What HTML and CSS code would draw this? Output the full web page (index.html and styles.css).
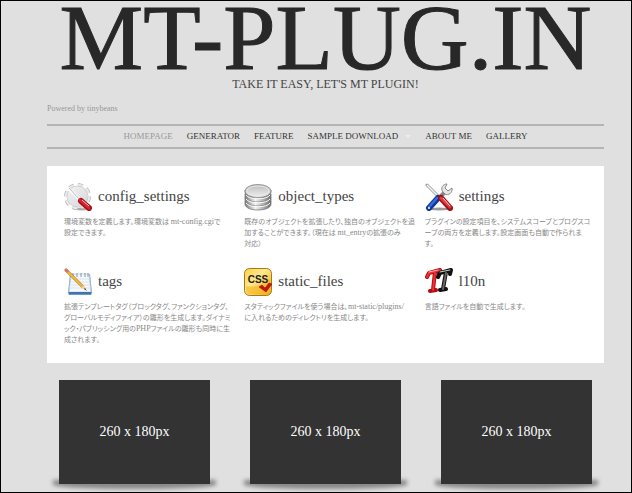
FILE: index.html
```html
<!DOCTYPE html>
<html lang="ja">
<head>
  <meta charset="utf-8">
  <title>MT-PLUG.IN</title>
  <link rel="stylesheet" href="styles.css">
</head>
<body>
  <div class="wrapper">
    <header class="header">
      <h1>MT-PLUG.IN</h1>
      <p class="tagline">TAKE IT EASY, LET'S MT PLUGIN!</p>
      <p class="powered">Powered by tinybeans</p>
    </header>

    <nav class="menu">
      <a href="#" class="current">HOMEPAGE</a>
      <a href="#">GENERATOR</a>
      <a href="#">FEATURE</a>
      <a href="#" class="has-sub">SAMPLE DOWNLOAD</a>
      <a href="#">ABOUT ME</a>
      <a href="#">GALLERY</a>
    </nav>

    <main>
      <section class="features">
        <article class="feature">
          <div class="feature-head">
            <svg class="icon" viewBox="0 0 28 28" aria-hidden="true">
              <defs>
                <linearGradient id="gear" x1="0" y1="0" x2="1" y2="1">
                  <stop offset="0" stop-color="#f4f4f4"/>
                  <stop offset="1" stop-color="#d3d6d8"/>
                </linearGradient>
              </defs>
              <ellipse cx="18" cy="26" rx="9" ry="1.500" fill="#aaa"/>
              <circle cx="13.500" cy="13.500" r="11.500" fill="none" stroke="#bbb" stroke-width="4" stroke-dasharray="5 4.030"/>
              <circle cx="13.500" cy="13.500" r="11.500" fill="none" stroke="#e9e9e9" stroke-width="2.500" stroke-dasharray="5 4.030"/>
              <circle cx="13.500" cy="13.500" r="10.500" fill="url(#gear)" stroke="#c9cbcd" stroke-width=".8"/>
              <path d="M4 5l11 11" stroke="#fff" stroke-width="3"/>
              <path d="M5 5l11 12" stroke="#b5b8ba" stroke-width="1"/>
              <path d="M17 18l8 7" stroke="#a80f18" stroke-width="6" stroke-linecap="round"/>
              <path d="M16 17l9 8" stroke="#d8242c" stroke-width="3" stroke-linecap="round"/>
              <path d="M18 17l7 6" stroke="#ffc9c9" stroke-width="1"/>
            </svg>
            <h2>config_settings</h2>
          </div>
          <p>環境変数を定義します。環境変数は <span>mt-config.cgi</span>で<br>設定できます。</p>
        </article>

        <article class="feature">
          <div class="feature-head">
            <svg class="icon" viewBox="0 0 28 28" aria-hidden="true">
              <defs>
                <linearGradient id="disk" x1="0" y1="0" x2="1" y2="0">
                  <stop offset="0" stop-color="#777"/>
                  <stop offset=".4" stop-color="#f4f4f4"/>
                  <stop offset="1" stop-color="#6c6c6c"/>
                </linearGradient>
                <linearGradient id="disktop" x1="0" y1="0" x2="0" y2="1">
                  <stop offset="0" stop-color="#bbb"/>
                  <stop offset="1" stop-color="#f1f1f1"/>
                </linearGradient>
              </defs>
              <g fill="url(#disk)" stroke="#777" stroke-width=".8">
                <path d="M1 18v3c0 8 26 8 26 0v-3z"/>
                <path d="M1 14v3c0 8 26 8 26 0v-3z"/>
                <path d="M1 11v2c0 8 26 8 26 0v-2z"/>
                <path d="M1 7v2c0 8 26 8 26 0V7z"/>
              </g>
              <g fill="none" stroke="#fff" stroke-width="1">
                <path d="M2 12c3 5 21 5 24 0"/>
                <path d="M2 16c3 5 21 5 24 0"/>
                <path d="M2 20c3 5 21 5 24 0"/>
              </g>
              <ellipse cx="14" cy="8" rx="13" ry="6.500" fill="url(#disktop)" stroke="#888" stroke-width=".8"/>
              <ellipse cx="14" cy="8" rx="11" ry="5" fill="none" stroke="#e8e8e8"/>
            </svg>
            <h2>object_types</h2>
          </div>
          <p>既存のオブジェクトを拡張したり、独自のオブジェクトを追<br>加することができます。（現在は <span>mt_entry</span>の拡張のみ<br>対応）</p>
        </article>

        <article class="feature">
          <div class="feature-head">
            <svg class="icon" viewBox="0 0 28 28" aria-hidden="true">
              <ellipse cx="14" cy="26" rx="11" ry="1.500" fill="#999"/>
              <path d="M2 2l14 14" stroke="#999" stroke-width="3" stroke-linecap="round"/>
              <path d="M2 2l14 14" stroke="#f5f5f5" stroke-width="1.500"/>
              <path d="M20 9L12 17" stroke="#888" stroke-width="4"/>
              <path d="M18 9c-3-4 0-8 4-8l-2 4 3 3 4-3c1 5-4 8-7 6z" fill="#e6e6e6" stroke="#888" stroke-width="1"/>
              <path d="M13 15L4 25" stroke="#12359b" stroke-width="6" stroke-linecap="round"/>
              <path d="M12 15L4 24" stroke="#346de0" stroke-width="2.500" stroke-linecap="round"/>
              <circle cx="4" cy="25" r="1" fill="#fff"/>
              <path d="M16 15l9 10" stroke="#9e1119" stroke-width="6" stroke-linecap="round"/>
              <path d="M16 15l9 9" stroke="#e33b3b" stroke-width="3" stroke-linecap="round"/>
              <path d="M18 15l7 8" stroke="#ffd5d5" stroke-width="1"/>
            </svg>
            <h2>settings</h2>
          </div>
          <p>プラグインの設定項目を、システムスコープとブログスコ<br>ープの両方を定義します。設定画面も自動で作られま<br>す。</p>
        </article>

        <article class="feature">
          <div class="feature-head">
            <svg class="icon" viewBox="0 0 28 28" aria-hidden="true">
              <path d="M6 6h20l2 19-1 2H5l-1-2z" fill="#6b9ccb"/>
              <path d="M7 6h18l2 18H5z" fill="#f6f9fc" stroke="#bccbdc" stroke-width=".8"/>
              <path d="M7 11h18M7 14h18M6 17h20M6 20h20" stroke="#d5dfe9" stroke-width=".8"/>
              <path d="M9 5v4M13 5v4M17 5v4M21 5v4M24 5v4" stroke="#8296ab" stroke-width="1"/>
              <path d="M5 25h22" stroke="#3f75ab" stroke-width="2"/>
              <path d="M2 2l17 17" stroke="#a46a13" stroke-width="3"/>
              <path d="M2 2l17 17" stroke="#f7bd3c" stroke-width="2"/>
              <path d="M1 1l3 3" stroke="#d77468" stroke-width="3"/>
              <path d="M17 20l3-3 2 5z" fill="#ecd1a3"/>
              <path d="M20 21l1-1 2 3z" fill="#333"/>
            </svg>
            <h2>tags</h2>
          </div>
          <p>拡張テンプレートタグ（ブロックタグ、ファンクションタグ、<br>グローバルモディファイア）の雛形を生成します。ダイナミ<br>ック・パブリッシング用の<span>PHP</span>ファイルの雛形も同時に生<br>成されます。</p>
        </article>

        <article class="feature">
          <div class="feature-head">
            <svg class="icon" viewBox="0 0 28 28" aria-hidden="true">
              <defs>
                <linearGradient id="gold" x1="0" y1="0" x2="1" y2="1">
                  <stop offset="0" stop-color="#ffcf45"/>
                  <stop offset=".4" stop-color="#ffea8c"/>
                  <stop offset="1" stop-color="#f1a60d"/>
                </linearGradient>
              </defs>
              <rect x=".5" y=".5" width="27" height="27" rx="5" fill="url(#gold)" stroke="#a8791b"/>
              <path d="M2 18c8 2 17-1 24-7v11q0 4-4 4H6q-4 0-4-4z" fill="#f4b51f" opacity=".6"/>
              <text class="css-text" x="14" y="15" text-anchor="middle">CSS</text>
              <path d="M15 19l3-2 3 3 4-5 3 1-6 8z" fill="#c3160c" stroke="#8d1008" stroke-width=".5"/>
            </svg>
            <h2>static_files</h2>
          </div>
          <p>スタティックファイルを使う場合は、<span>mt-static/plugins/</span><br>に入れるためのディレクトリを生成します。</p>
        </article>

        <article class="feature">
          <div class="feature-head">
            <svg class="icon" viewBox="0 0 28 28" aria-hidden="true">
              <g fill="none" stroke-linecap="round" stroke-linejoin="round">
                <path d="M2 9l2-4 11-3-1 4M10 4L8 22M5 23l6-1" stroke="#b30d13" stroke-width="4"/>
                <path d="M2 9l2-4 11-3M10 5L8 22" stroke="#ee3036" stroke-width="2"/>
                <path d="M4 4l9-2" stroke="#ffb0b0" stroke-width="1"/>
                <path d="M13 9l2-4 11-3-1 4M21 4l-3 17M15 22l6-1" stroke="#111" stroke-width="4"/>
                <path d="M21 5l-3 16" stroke="#666" stroke-width="2"/>
                <path d="M15 4l10-2" stroke="#ccc" stroke-width="1"/>
              </g>
            </svg>
            <h2>l10n</h2>
          </div>
          <p>言語ファイルを自動で生成します。</p>
        </article>
      </section>

      <section class="thumbs">
        <div class="thumb"><span>260 x 180px</span></div>
        <div class="thumb"><span>260 x 180px</span></div>
        <div class="thumb"><span>260 x 180px</span></div>
      </section>
    </main>
  </div>
</body>
</html>
```
FILE: styles.css
```css
* {
  box-sizing: border-box;
}

body {
  margin: 0;
  min-height: 100vh;
  border: 1px solid #000;
  background-color: #e0e0e0;
  color: #333;
  font-family: "Liberation Serif", "Noto Sans CJK JP", serif;
}

h1,
h2,
p {
  margin: 0;
  font-weight: normal;
}

.wrapper {
  padding: 0 27px 7px 46px;
}

.header {
  text-align: center;
}

h1 {
  padding-bottom: 2px;
  font-size: 94px;
  line-height: 72px;
  color: #282828;
  -webkit-text-stroke: 1px #282828;
  white-space: nowrap;
}

.tagline {
  font-size: 12px;
  line-height: 18px;
  color: #444;
}

.powered {
  padding: 8px 0;
  font-size: 8px;
  line-height: 15px;
  color: #999;
  text-align: left;
}

.menu {
  display: flex;
  justify-content: center;
  gap: 14px;
  border-top: 2px solid #b4b4b4;
  border-bottom: 2px solid #b4b4b4;
  font-size: 9px;
  line-height: 21px;
}

.menu a {
  color: #333;
  text-decoration: none;
  white-space: nowrap;
}

.menu .current {
  color: #999;
}

.menu .has-sub::after {
  content: "";
  display: inline-block;
  margin-left: 7px;
  border: 3px solid transparent;
  border-top-color: #eee;
  border-bottom: 0;
  vertical-align: middle;
}

.features {
  display: grid;
  grid-template-columns: repeat(3, minmax(0, 1fr));
  gap: 18px;
  margin-top: 17px;
  padding: 17px;
  background-color: #fff;
}

.feature-head {
  display: flex;
  align-items: center;
  gap: 6px;
  margin-bottom: 6px;
}

.icon {
  flex: none;
  width: 28px;
  height: 28px;
}

.css-text {
  font: bold 10px "Liberation Sans", sans-serif;
  fill: #222;
}

h2 {
  font-size: 15px;
  line-height: 20px;
  padding-bottom: 2px;
  color: #444;
}

.feature p {
  font-size: 7px;
  line-height: 11px;
  color: #888;
  font-feature-settings: "palt";
  white-space: nowrap;
}

.feature p span {
  font-size: 8px;
  line-height: 1;
}

.thumbs {
  display: grid;
  grid-template-columns: repeat(3, 1fr);
  gap: 40px;
  padding: 17px 12px 0;
}

.thumb {
  position: relative;
  display: flex;
  align-items: center;
  justify-content: center;
  aspect-ratio: 151 / 104;
  color: #fff;
  font-size: 14px;
  z-index: 0;
}

/* curved shadow below each thumbnail */
.thumb::before {
  content: "";
  position: absolute;
  left: -6px;
  right: -6px;
  bottom: -5px;
  height: 9px;
  border-radius: 0 0 50% 50%;
  background-color: rgba(0, 0, 0, 0.4);
  filter: blur(2px);
  z-index: -2;
}

.thumb::after {
  content: "";
  position: absolute;
  inset: 0;
  background-color: #333;
  z-index: -1;
}
```
